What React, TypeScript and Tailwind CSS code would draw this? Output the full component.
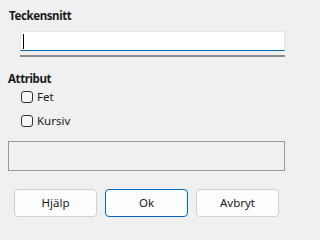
import React from "react";

function Check({ label }: { label: string }) {
  return (
    <div className="flex items-center h-[24px]">
      <div className="w-[12px] h-[12px] border border-[#333] rounded-[3px] bg-[#f7f7f7] ml-[13px]" />
      <span className="ml-[4px] text-[11.5px] text-[#1a1a1a] leading-[16px]">{label}</span>
    </div>
  );
}

function Btn({ label, primary }: { label: string; primary?: boolean }) {
  return (
    <button
      className={
        "w-[83px] h-[28px] rounded-[4px] bg-[#fdfdfd] text-[11.5px] text-[#1a1a1a] border " +
        (primary ? "border-[#0067c0]" : "border-[#d1d1d1]")
      }
    >
      {label}
    </button>
  );
}

export default function App() {
  return (
    <div className="min-h-screen w-full bg-[#f0f0f0]">
      <div
        className="w-[293px] h-[231px] bg-[#f0f0f0] overflow-hidden flex flex-col"
        style={{ fontFamily: '"Noto Sans", "Liberation Sans", sans-serif' }}
      >
        <div className="pl-[9px] pt-[8px] text-[11.5px] leading-[16px] font-bold tracking-[-0.4px] text-[#1a1a1a]">
          Teckensnitt
        </div>
        <div className="ml-[20px] mt-[7px] w-[265px] h-[20px] bg-white border border-[#e5e5e5] border-b-[#0067c0] flex items-center">
          <div className="ml-[2px] w-[1px] h-[15px] bg-black" />
        </div>
        <div className="ml-[20px] mt-[4px] w-[265px] h-[2px] bg-[#8c8c8c]" />
        <div className="pl-[8px] mt-[14px] text-[11.5px] leading-[16px] font-bold tracking-[-0.4px] text-[#1a1a1a]">
          Attribut
        </div>
        <div className="-mt-[2px] flex flex-col pl-[8px]">
          <Check label="Fet" />
          <Check label="Kursiv" />
        </div>
        <div className="ml-[8px] mt-[8px] w-[277px] h-[30px] border border-[#999]" />
        <div className="mt-[18px] ml-[14px] flex gap-[8px]">
          <Btn label="Hjälp" />
          <Btn label="Ok" primary />
          <Btn label="Avbryt" />
        </div>
      </div>
    </div>
  );
}
